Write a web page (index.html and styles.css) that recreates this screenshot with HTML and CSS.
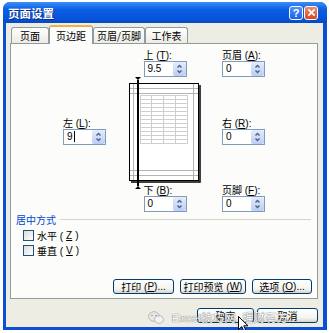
FILE: index.html
```html
<!DOCTYPE html>
<html lang="zh-CN">
<head>
    <meta charset="UTF-8">
    <title>页面设置</title>
    <link rel="stylesheet" href="styles.css">
</head>
<body>
    <div class="dialog">
        <div class="titlebar">
            <span class="title">页面设置</span>
            <div class="caption-buttons">
                <span class="cap-btn help">?</span>
                <span class="cap-btn close">
                    <svg viewBox="0 0 10 10" width="9" height="9"><path d="M1.5 1.5 L8.5 8.5 M8.5 1.5 L1.5 8.5" stroke="#fff" stroke-width="2"/></svg>
                </span>
            </div>
        </div>

        <div class="client">
            <div class="tabs">
                <span class="tab t1">页面</span>
                <span class="tab t2 active">页边距</span>
                <span class="tab t3">页眉/页脚</span>
                <span class="tab t4">工作表</span>
            </div>

            <div class="panel">
                <div class="margins">
                    <div class="field f-top">
                        <span class="label">上 (<u>T</u>):</span>
                        <div class="spin"><span class="val">9.5</span><span class="arrows"><svg viewBox="0 0 11 14" width="11" height="14"><path d="M3.5 5.5 L5.5 3.5 L7.5 5.5 M3.5 8.5 L5.5 10.5 L7.5 8.5" fill="none" stroke="#4d6185" stroke-width="1.4"/></svg></span></div>
                    </div>
                    <div class="field f-header">
                        <span class="label">页眉 (<u>A</u>):</span>
                        <div class="spin"><span class="val">0</span><span class="arrows"><svg viewBox="0 0 11 14" width="11" height="14"><path d="M3.5 5.5 L5.5 3.5 L7.5 5.5 M3.5 8.5 L5.5 10.5 L7.5 8.5" fill="none" stroke="#4d6185" stroke-width="1.4"/></svg></span></div>
                    </div>
                    <div class="field f-left">
                        <span class="label">左 (<u>L</u>):</span>
                        <div class="spin"><span class="val">9<span class="caret"></span></span><span class="arrows"><svg viewBox="0 0 11 14" width="11" height="14"><path d="M3.5 5.5 L5.5 3.5 L7.5 5.5 M3.5 8.5 L5.5 10.5 L7.5 8.5" fill="none" stroke="#4d6185" stroke-width="1.4"/></svg></span></div>
                    </div>

                    <svg class="preview" viewBox="0 0 72 112" width="72" height="112">
                        <path d="M71 8 V105 H2" fill="none" stroke="#000" stroke-width="1.5"/>
                        <rect x="0.5" y="6.5" width="69" height="97" fill="#fff" stroke="#000"/>
                        <g stroke="#b4b4b4" stroke-width="1">
                            <path d="M1 11.5 H69 M1 16.5 H69 M1 93.5 H69 M1 98.5 H69 M64.5 7 V103 M4.5 7 V103"/>
                        </g>
                        <g stroke="#cfcfcf" stroke-width="1">
                            <path d="M11.5 18 V66 M22.5 18 V66 M34.5 18 V66 M46.5 18 V66 M58.5 18 V66"/>
                            <path d="M11 18.5 H59 M11 22.5 H59 M11 26.5 H59 M11 30.5 H59 M11 34.5 H59 M11 38.5 H59 M11 42.5 H59 M11 46.5 H59 M11 50.5 H59 M11 54.5 H59 M11 58.5 H59 M11 62.5 H59 M11 66.5 H59"/>
                        </g>
                        <path d="M9 3 V109" stroke="#000" stroke-width="2"/>
                        <path d="M6 0 H12 L9 3 Z M6 112 H12 L9 109 Z" fill="#000"/>
                    </svg>

                    <div class="field f-right">
                        <span class="label">右 (<u>R</u>):</span>
                        <div class="spin"><span class="val">0</span><span class="arrows"><svg viewBox="0 0 11 14" width="11" height="14"><path d="M3.5 5.5 L5.5 3.5 L7.5 5.5 M3.5 8.5 L5.5 10.5 L7.5 8.5" fill="none" stroke="#4d6185" stroke-width="1.4"/></svg></span></div>
                    </div>
                    <div class="field f-bottom">
                        <span class="label">下 (<u>B</u>):</span>
                        <div class="spin"><span class="val">0</span><span class="arrows"><svg viewBox="0 0 11 14" width="11" height="14"><path d="M3.5 5.5 L5.5 3.5 L7.5 5.5 M3.5 8.5 L5.5 10.5 L7.5 8.5" fill="none" stroke="#4d6185" stroke-width="1.4"/></svg></span></div>
                    </div>
                    <div class="field f-footer">
                        <span class="label">页脚 (<u>F</u>):</span>
                        <div class="spin"><span class="val">0</span><span class="arrows"><svg viewBox="0 0 11 14" width="11" height="14"><path d="M3.5 5.5 L5.5 3.5 L7.5 5.5 M3.5 8.5 L5.5 10.5 L7.5 8.5" fill="none" stroke="#4d6185" stroke-width="1.4"/></svg></span></div>
                    </div>
                </div>

                <div class="group">
                    <div class="group-title"><span>居中方式</span><span class="rule"></span></div>
                    <div class="check first"><span class="box"></span>水平 (<u>Z</u>)</div>
                    <div class="check"><span class="box"></span>垂直 (<u>V</u>)</div>
                </div>

                <div class="panel-buttons">
                    <button class="btn b-print">打印 (<u>P</u>)...</button>
                    <button class="btn b-preview">打印预览 (<u>W</u>)</button>
                    <button class="btn b-options">选项 (<u>O</u>)...</button>
                </div>
            </div>

            <div class="dialog-buttons">
                <button class="btn b-ok">确定</button>
                <button class="btn b-cancel">取消</button>
            </div>
        </div>

        <!-- watermark + mouse pointer lying over the dialog buttons -->
        <div class="watermark">
            <svg viewBox="0 0 16 13" width="16" height="13">
                <ellipse cx="6" cy="5.5" rx="5.5" ry="4.8" fill="#e8e8e8" stroke="#b8b8b8"/>
                <ellipse cx="11" cy="8.5" rx="4.5" ry="3.8" fill="#f2f2f2" stroke="#b8b8b8"/>
                <circle cx="4" cy="4.5" r="0.8" fill="#999"/>
                <circle cx="8" cy="4.5" r="0.8" fill="#999"/>
            </svg>
            <span>Excel技巧网_理财有方</span>
        </div>
        <svg class="cursor" viewBox="0 0 11 17" width="11" height="17">
            <path d="M0.5 0.5 V13.5 L3.8 10.5 L6 15.8 L8 15 L5.8 9.8 H10 Z" fill="#fff" stroke="#000"/>
        </svg>
    </div>
</body>
</html>
```

FILE: styles.css
```css
* {
    margin: 0;
    padding: 0;
    box-sizing: border-box;
}

body {
    background: #fff;
    font-family: "Liberation Sans", "Noto Sans CJK SC", sans-serif;
    font-size: 10px;
    color: #000;
}

u {
    text-decoration: underline;
}

.dialog {
    position: relative;
    width: 324px;
    height: 328px;
    margin: 2px 0 0 3px;
    background: #0b50d4;
    border-radius: 7px 7px 0 0;
    display: flex;
    flex-direction: column;
}

/* title bar */
.titlebar {
    height: 21px;
    display: flex;
    align-items: center;
    justify-content: space-between;
    padding: 0 9px 0 5px;
    background: linear-gradient(#3d8ef7, #0b5fe3 35%, #0653d8 80%, #0849c4);
    border-radius: 7px 7px 0 0;
}

.title {
    color: #fff;
    font-family: "Noto Sans CJK SC", sans-serif;
    font-weight: bold;
    font-size: 11.5px;
    text-shadow: 1px 1px #0a2d8a;
}

.caption-buttons {
    display: flex;
    gap: 1px;
}

.cap-btn {
    width: 14px;
    height: 14px;
    border: 1px solid #fff;
    border-radius: 3px;
    display: flex;
    align-items: center;
    justify-content: center;
    color: #fff;
    font-weight: bold;
    font-size: 11px;
}

.help {
    background: linear-gradient(#4f93ff, #1a5fe8);
}

.close {
    background: linear-gradient(#ec8a6c, #d9481f);
}

/* client area */
.client {
    flex: 1;
    margin: 0 4px 3px 3px;
    padding: 0 5px 0 4px;
    background: #eeede3;
}

.tabs {
    display: flex;
    align-items: flex-end;
    height: 20px;
}

.tab {
    height: 16px;
    border: 1px solid #919b9c;
    border-bottom: none;
    border-radius: 3px 3px 0 0;
    background: linear-gradient(#fff, #ecebe5);
    display: flex;
    align-items: center;
    justify-content: center;
    font-family: "Noto Sans CJK SC", sans-serif;
}

.t1 { width: 38px; margin-left: 1px; }
.t2 { width: 44px; }
.t3 { width: 52px; }
.t4 { width: 43px; }

.tab.active {
    height: 19px;
    margin-bottom: -1px;
    position: relative;
    z-index: 1;
    background: #fcfcfa;
    border-top: 2px solid #f1b04e;
}

.panel {
    height: 256px;
    border: 1px solid #919b9c;
    background: #fcfcfa;
    display: flex;
    flex-direction: column;
}

/* margin fields around the page preview */
.margins {
    display: grid;
    grid-template-columns: 43px 23px 72px 21px 43px;
    grid-template-rows: 27px 108px 27px;
    margin: 6px 0 0 52px;
}

.field {
    display: flex;
    flex-direction: column;
}

.label {
    height: 11px;
    line-height: 11px;
    white-space: nowrap;
}

.f-top { grid-column: 3; grid-row: 1; justify-self: center; }
.f-header { grid-column: 5; grid-row: 1; }
.f-left { grid-column: 1; grid-row: 2; align-self: center; }
.f-right { grid-column: 5; grid-row: 2; align-self: center; }
.f-bottom { grid-column: 3; grid-row: 3; justify-self: center; }
.f-footer { grid-column: 5; grid-row: 3; }

.preview {
    grid-column: 3;
    grid-row: 2;
    margin-bottom: -4px;
    display: block;
}

.spin {
    width: 43px;
    height: 16px;
    border: 1px solid #7f9db9;
    background: #fff;
    display: flex;
    align-items: center;
    justify-content: space-between;
    padding-left: 3px;
}

.val {
    display: flex;
    align-items: center;
    line-height: 12px;
}

.caret {
    width: 1px;
    height: 11px;
    margin-left: 1px;
    background: #000;
}

.arrows {
    width: 13px;
    height: 14px;
    display: flex;
    align-items: center;
    justify-content: center;
    border-radius: 2px;
    background: linear-gradient(#e4ecfd, #bccdf3);
}

/* centre on page */
.group {
    margin-top: 1px;
    padding: 0 6px 0 5px;
}

.group-title {
    display: flex;
    align-items: center;
    height: 12px;
    color: #0046d5;
    font-family: "Noto Sans CJK SC", sans-serif;
}

.rule {
    flex: 1;
    height: 1px;
    margin-left: 4px;
    background: #d6d5c6;
}

.check {
    display: flex;
    align-items: center;
    gap: 3px;
    height: 15px;
    padding-left: 7px;
    white-space: pre;
}

.check.first {
    margin-top: 3px;
}

.box {
    width: 11px;
    height: 11px;
    border: 1px solid #1c5180;
    background: linear-gradient(135deg, #dcdcd7, #fff);
}

/* buttons */
.btn {
    height: 15px;
    border: 1px solid #003c74;
    border-radius: 3px;
    background: linear-gradient(#fff, #f3f3ee 70%, #d8d3c8);
    font-family: "Liberation Sans", "Noto Sans CJK SC", sans-serif;
    font-size: 10px;
    color: #000;
    display: flex;
    align-items: center;
    justify-content: center;
    white-space: pre;
}

.panel-buttons {
    display: flex;
    justify-content: flex-end;
    gap: 6px;
    margin-top: auto;
    margin-bottom: 4px;
    padding-right: 5px;
}

.b-print { width: 61px; }
.b-preview { width: 66px; }
.b-options { width: 60px; }

.dialog-buttons {
    display: flex;
    justify-content: flex-end;
    gap: 3px;
    margin-top: 9px;
}

.b-ok { width: 57px; }
.b-cancel { width: 61px; }

.watermark {
    position: absolute;
    left: 145px;
    top: 307px;
    display: flex;
    align-items: center;
    gap: 8px;
    font-size: 11px;
    letter-spacing: 0.5px;
    color: #fdfdfd;
    text-shadow: 0 0 1px #6e6e6e, 0 0 1px #6e6e6e;
    white-space: nowrap;
}

.cursor {
    position: absolute;
    left: 235px;
    top: 314px;
}
```
